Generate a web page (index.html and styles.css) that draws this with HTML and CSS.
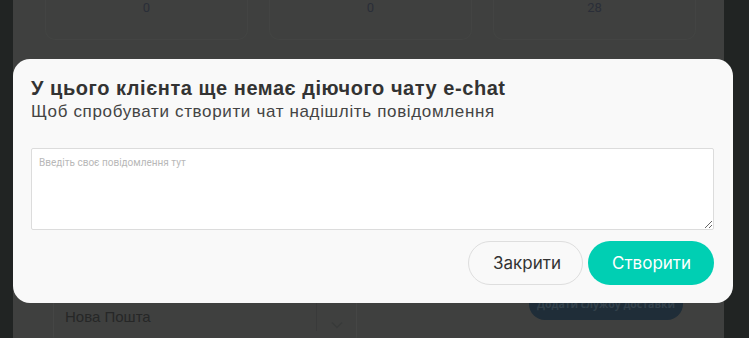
FILE: index.html
```html
<!DOCTYPE html>
<html lang="uk">
<head>
    <meta charset="UTF-8">
    <meta name="viewport" content="width=device-width, initial-scale=1.0">
    <title>e-chat</title>
    <link rel="stylesheet" href="styles.css">
</head>
<body>
    <div class="page">
        <div class="side side-left"></div>
        <main class="content">
            <div class="stats">
                <div class="stat-card">0</div>
                <div class="stat-card">0</div>
                <div class="stat-card">28</div>
            </div>
            <div class="delivery">
                <div class="select-box">
                    <span class="select-value">Нова Пошта</span>
                    <span class="select-arrow">
                        <svg width="12" height="8" viewBox="0 0 12 8"><path d="M1 1.5l5 5 5-5" fill="none" stroke="#383a3a" stroke-width="1.5"/></svg>
                    </span>
                </div>
                <button class="add-delivery">Додати службу доставки</button>
            </div>
        </main>
        <div class="side side-right"></div>
    </div>

    <div class="modal">
        <h2 class="modal-title">У цього клієнта ще немає діючого чату e-chat</h2>
        <p class="modal-subtitle">Щоб спробувати створити чат надішліть повідомлення</p>
        <textarea class="message" placeholder="Введіть своє повідомлення тут"></textarea>
        <div class="modal-actions">
            <button class="btn btn-close">Закрити</button>
            <button class="btn btn-create">Створити</button>
        </div>
    </div>
</body>
</html>
```

FILE: styles.css
```css
* {
    margin: 0;
    padding: 0;
    box-sizing: border-box;
}

body {
    font-family: "Liberation Sans", Arial, sans-serif;
    width: 749px;
    height: 338px;
    overflow: hidden;
    background: #3f403f;
    color: #333;
}

/* dimmed page behind the modal */
.page {
    display: flex;
    height: 338px;
}

.side {
    background: #212423;
}

.side-left {
    width: 13px;
}

.side-right {
    width: 25px;
}

.content {
    flex: 1;
    display: flex;
    flex-direction: column;
    justify-content: space-between;
    background: #3f403f;
}

.stats {
    display: flex;
    gap: 21px;
    padding-left: 32px;
}

.stat-card {
    width: 203px;
    height: 40px;
    padding-top: 2px;
    line-height: 11px;
    border: 1px solid #434443;
    border-top: none;
    border-radius: 0 0 10px 10px;
    text-align: center;
    font-family: Roboto, sans-serif;
    font-size: 13px;
    color: #2a2e38;
}

.delivery {
    display: flex;
    align-items: flex-start;
    justify-content: space-between;
    padding: 0 41px 0 40px;
    height: 46px;
}

.select-box {
    display: flex;
    width: 304px;
    height: 50px;
    border: 1px solid #454645;
    border-radius: 6px;
}

.select-value {
    flex: 1;
    padding: 15px 0 0 11px;
    font-family: "Liberation Sans Narrow", "Liberation Sans", sans-serif;
    font-size: 15px;
    color: #262727;
}

.select-arrow {
    width: 40px;
    margin: 8px 0 10px;
    padding-top: 14px;
    border-left: 1px solid #393a3a;
    text-align: center;
}

.add-delivery {
    appearance: none;
    margin-top: -4px;
    width: 154px;
    height: 32px;
    border: none;
    border-radius: 16px;
    background-color: #1f2d38;
    color: #33414b;
    font-family: "Open Sans", sans-serif;
    font-size: 10.5px;
    font-weight: bold;
}

/* modal */
.modal {
    position: absolute;
    left: 13px;
    top: 59px;
    width: 720px;
    height: 244px;
    padding: 17px 19px 18px 18px;
    background: #f9f9f9;
    border-radius: 17px;
}

.modal-title {
    font-size: 20px;
    font-weight: bold;
    letter-spacing: 0.55px;
    color: #333;
    line-height: 24px;
}

.modal-subtitle {
    font-size: 17px;
    letter-spacing: 0.65px;
    color: #444;
    line-height: 24px;
}

.message {
    display: block;
    width: 683px;
    height: 82px;
    margin-top: 24px;
    padding: 8px 7px;
    border: 1px solid #dcdcdc;
    border-radius: 2px;
    background: #fff;
    font-family: Roboto, sans-serif;
    font-size: 10px;
    resize: vertical;
}

.message::placeholder {
    color: #b8b8b8;
}

.modal-actions {
    display: flex;
    justify-content: flex-end;
    gap: 5px;
    margin-top: 11px;
}

.btn {
    height: 44px;
    padding: 0 24px;
    border-radius: 22px;
    font-family: Inter, sans-serif;
    font-size: 17px;
    cursor: pointer;
}

.btn-close {
    width: 115px;
    border: 1px solid #dedede;
    background: #f9f9f9;
    color: #333;
}

.btn-create {
    width: 126px;
    border: none;
    background: #00cfb3;
    color: #fff;
}
```
